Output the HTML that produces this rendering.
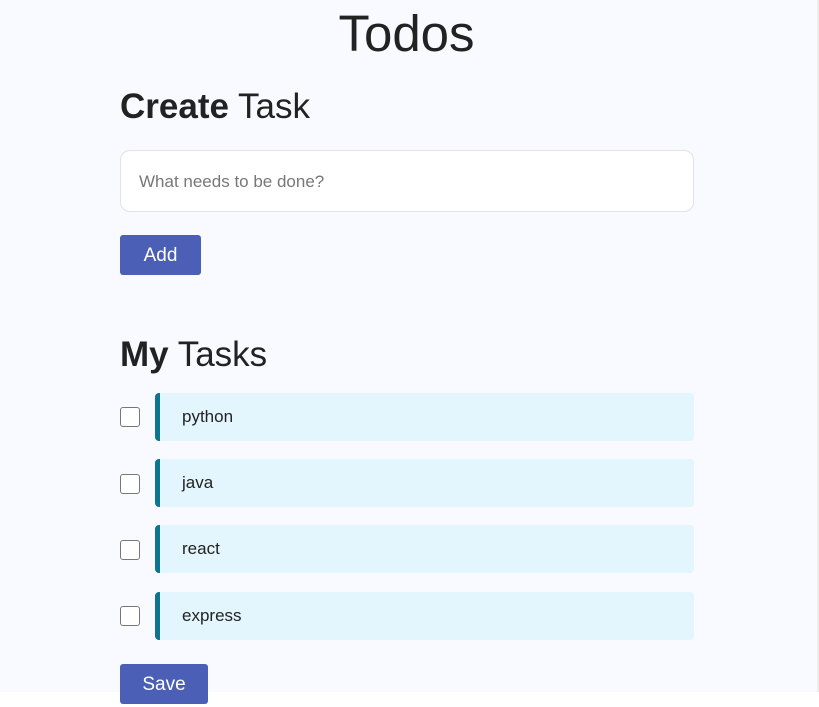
<!DOCTYPE html>
<html><head><style>
body{margin:0;width:819px;height:707px;background:#fff;font-family:"Liberation Sans",Roboto,sans-serif;overflow:hidden;position:relative}
.bg{position:absolute;left:0;top:0;width:817px;height:692px;background:#f8faff}
.edge{position:absolute;left:817px;top:0;width:2px;height:692px;background:#ececec}
.a{position:absolute}
h1{position:absolute;margin:0;left:0;width:813px;text-align:center;top:4px;font-size:51px;font-weight:400;color:#222}
h2{position:absolute;margin:0;left:120px;font-size:35px;font-weight:400;color:#222}
h2 b{font-weight:700}
.inp{left:120px;top:150px;border:1px solid #e3e3e6;border-radius:10px;background:#fff;box-sizing:border-box;width:574px;height:62px;padding-left:18px;line-height:62px;font-size:17px;color:#777}
.btn{background:#4a5fb5;color:#fff;border-radius:3px;font-size:19px;text-align:center;line-height:41px;height:40px}
.cb{left:120px;width:18px;height:18px;border:1px solid #777;border-radius:3px;background:#fff}
.it{left:155px;width:539px;height:48px;background:#e3f5fd;border-left:5px solid #0e7490;border-radius:4px;box-sizing:border-box;padding-left:22px;line-height:48px;font-size:17px;color:#222}
</style></head><body>
<div class="bg"></div><div class="edge"></div>
<h1>Todos</h1>
<h2 style="top:87px"><b>Create</b> Task</h2>
<div class="a inp">What needs to be done?</div>
<div class="a btn" style="left:120px;top:235px;width:81px">Add</div>
<h2 style="top:335px"><b>My</b> Tasks</h2>
<div class="a cb" style="top:407px"></div><div class="a it" style="top:393px">python</div>
<div class="a cb" style="top:474px"></div><div class="a it" style="top:459px">java</div>
<div class="a cb" style="top:540px"></div><div class="a it" style="top:525px">react</div>
<div class="a cb" style="top:606px"></div><div class="a it" style="top:592px">express</div>
<div class="a btn" style="left:120px;top:664px;width:88px">Save</div>
</body></html>
